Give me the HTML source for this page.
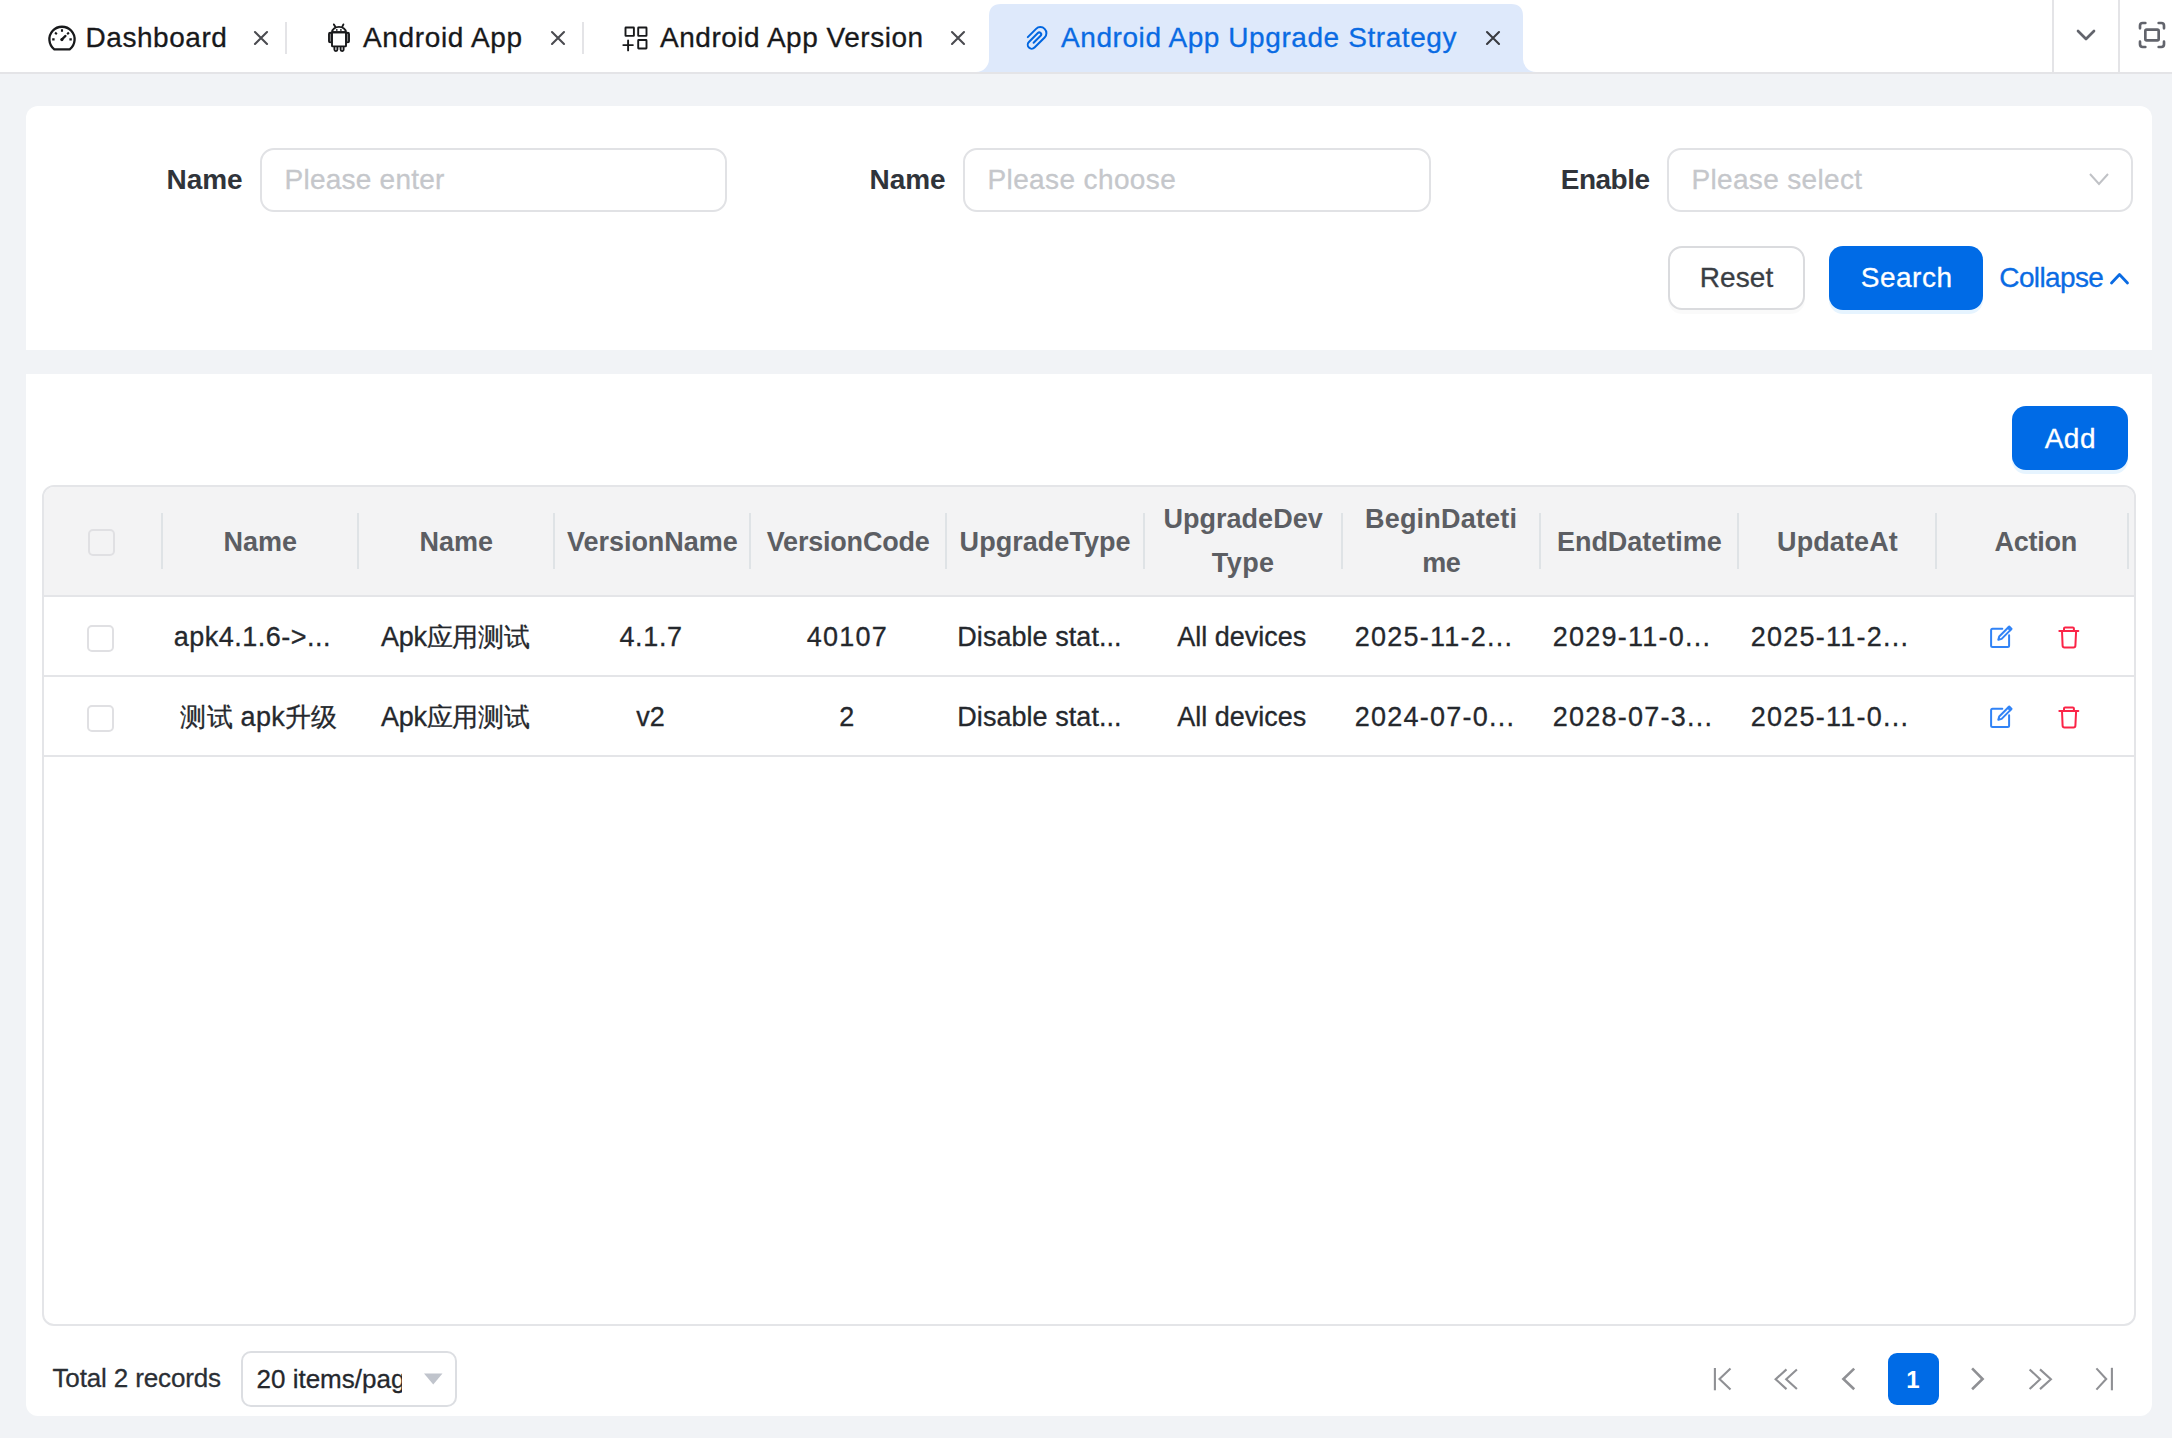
<!DOCTYPE html>
<html><head><meta charset="utf-8"><title>Android App Upgrade Strategy</title>
<style>
html,body{margin:0;padding:0;}
body{width:2172px;height:1438px;position:relative;overflow:hidden;background:#f1f3f6;font-family:"Liberation Sans", sans-serif;}
#tabbar{position:absolute;left:0;top:0;width:2172px;height:72px;background:#fff;border-bottom:2px solid #e4e4e7;}
.t{position:absolute;white-space:nowrap;}
.n{-webkit-text-stroke:0.3px currentColor;}
.box{position:absolute;box-sizing:border-box;border:2px solid #e1e2e5;background:#fff;}
.cb{position:absolute;width:27px;height:27px;box-sizing:border-box;border:2px solid #e0e0e3;border-radius:5px;}
svg{overflow:visible}
</style></head><body>
<div id="tabbar"></div><svg style="position:absolute;left:976px;top:4px" width="560" height="68" viewBox="0 0 560 68">
<path d="M0 68 A13 13 0 0 0 13 55 L13 12 Q13 0 25 0 L535 0 Q547 0 547 12 L547 55 A13 13 0 0 0 560 68 Z" fill="#dee9fb"/>
</svg><div style="position:absolute;left:285px;top:22px;width:2px;height:32px;background:#e4e4e7"></div><div style="position:absolute;left:582px;top:22px;width:2px;height:32px;background:#e4e4e7"></div><div style="position:absolute;left:2052px;top:0;width:2px;height:72px;background:#e4e4e7"></div><div style="position:absolute;left:2118px;top:0;width:2px;height:72px;background:#e4e4e7"></div><div class="t n" style="left:85.60px;top:24.40px;font-size:28px;line-height:28px;color:#18191b;font-weight:normal;letter-spacing:0.54px;">Dashboard</div>
<div class="t n" style="left:363.00px;top:24.40px;font-size:28px;line-height:28px;color:#18191b;font-weight:normal;letter-spacing:0.65px;">Android App</div>
<div class="t n" style="left:660.00px;top:24.40px;font-size:28px;line-height:28px;color:#18191b;font-weight:normal;letter-spacing:0.52px;">Android App Version</div>
<div class="t n" style="left:1061.00px;top:24.40px;font-size:28px;line-height:28px;color:#0a6be3;font-weight:normal;letter-spacing:0.58px;">Android App Upgrade Strategy</div>
<svg style="position:absolute;left:254px;top:31px" width="14" height="14" viewBox="0 0 14 14"><path d="M1 1 L13 13 M13 1 L1 13" stroke="#4a4b50" stroke-width="2.1" stroke-linecap="round"/></svg>
<svg style="position:absolute;left:551px;top:31px" width="14" height="14" viewBox="0 0 14 14"><path d="M1 1 L13 13 M13 1 L1 13" stroke="#4a4b50" stroke-width="2.1" stroke-linecap="round"/></svg>
<svg style="position:absolute;left:951px;top:31px" width="14" height="14" viewBox="0 0 14 14"><path d="M1 1 L13 13 M13 1 L1 13" stroke="#4a4b50" stroke-width="2.1" stroke-linecap="round"/></svg>
<svg style="position:absolute;left:1486px;top:31px" width="14" height="14" viewBox="0 0 14 14"><path d="M1 1 L13 13 M13 1 L1 13" stroke="#393b40" stroke-width="2.1" stroke-linecap="round"/></svg>
<svg style="position:absolute;left:46px;top:23px" width="32" height="30" viewBox="0 0 32 30" fill="none" stroke="#18191b">
<path d="M8.3 26.3 A12.6 12.6 0 1 1 23.7 26.3 Z" stroke-width="2.3" stroke-linejoin="round"/>
<path d="M16 6.2v2.6 M6.2 16.4h2.4 M23.4 16.4h2.4 M9.1 9.5l1.7 1.7 M22.9 9.5l-1.7 1.7" stroke-width="2.1" stroke-linecap="butt"/>
<path d="M15.9 16.4 L19.5 12.9" stroke-width="2.2" stroke-linecap="round"/><circle cx="15.9" cy="16.6" r="1.6" fill="#18191b" stroke="none"/>
</svg><svg style="position:absolute;left:324px;top:22px" width="30" height="32" viewBox="0 0 30 32" fill="none" stroke="#18191b" stroke-width="1.9">
<path d="M9.9 2.4 L11.3 4.8 M19.4 2.4 L18.2 4.8" stroke-linecap="round"/>
<path d="M8 10.2 A7 5.3 0 0 1 22 10.2 Z" stroke-linejoin="round"/>
<rect x="8" y="10.2" width="14" height="14.2" rx="0.6"/>
<rect x="5" y="10.8" width="2.4" height="9.6" rx="1.2"/><rect x="22.6" y="10.8" width="2.4" height="9.6" rx="1.2"/>
<path d="M10.4 24.4 V27.6 A1.5 1.5 0 0 0 13.4 27.6 V24.4 M16.6 24.4 V27.6 A1.5 1.5 0 0 0 19.6 27.6 V24.4"/>
<circle cx="12.8" cy="7.9" r="0.9" fill="#18191b" stroke="none"/><circle cx="16.9" cy="7.9" r="0.9" fill="#18191b" stroke="none"/>
</svg><svg style="position:absolute;left:621px;top:24px" width="30" height="30" viewBox="0 0 30 30" fill="none" stroke="#18191b" stroke-width="1.9">
<rect x="4.5" y="3.5" width="8.4" height="8.4" rx="0.4"/><rect x="17.2" y="3.5" width="8.3" height="8.4" rx="0.4"/><rect x="17.2" y="16" width="8.3" height="8.5" rx="0.4"/>
<path d="M7.1 16.4 V26.4 M2.3 21.1 H11.9" stroke-linecap="round"/>
</svg><svg style="position:absolute;left:1015px;top:16px" width="44" height="44" viewBox="0 0 44 44">
<path d="M12.80 21.14 L21.07 12.87 A6.05 6.05 0 0 1 29.63 21.43 L19.52 31.54 A3.95 3.95 0 0 1 13.93 25.95 L22.84 17.04 A1.95 1.95 0 0 1 25.60 19.80 L18.60 26.80" fill="none" stroke="#0066e0" stroke-width="2" stroke-linecap="round" stroke-linejoin="round"/>
</svg><svg style="position:absolute;left:2070px;top:19px" width="32" height="32" viewBox="0 0 24 24"><path d="m6 9 6 6 6-6" fill="none" stroke="#62646c" stroke-width="2" stroke-linecap="round" stroke-linejoin="round"/></svg><svg style="position:absolute;left:2136px;top:19px" width="32" height="32" viewBox="0 0 24 24" fill="none" stroke="#62646c" stroke-width="2" stroke-linecap="round" stroke-linejoin="round"><path d="M3 7V5a2 2 0 0 1 2-2h2"/><path d="M17 3h2a2 2 0 0 1 2 2v2"/><path d="M21 17v2a2 2 0 0 1-2 2h-2"/><path d="M7 21H5a2 2 0 0 1-2-2v-2"/><rect width="10" height="8" x="7" y="8" rx="1"/></svg><div style="position:absolute;left:26px;top:106px;width:2126px;height:244px;background:#fff;border-radius:12px 12px 0 0"></div><div class="t" style="right:1930.67px;top:166.30px;font-size:28px;line-height:28px;color:#30343a;font-weight:bold;letter-spacing:-0.13px;margin-right:-1px">Name</div>
<div class="t" style="right:1227.67px;top:166.30px;font-size:28px;line-height:28px;color:#30343a;font-weight:bold;letter-spacing:-0.13px;margin-right:-1px">Name</div>
<div class="t" style="right:523.57px;top:166.30px;font-size:28px;line-height:28px;color:#30343a;font-weight:bold;letter-spacing:-0.53px;margin-right:-1px">Enable</div>
<div class="box" style="left:260px;top:148px;width:467px;height:64px;border-radius:14px"></div><div class="t n" style="left:284.50px;top:166.30px;font-size:28px;line-height:28px;color:#c5c7cb;font-weight:normal;letter-spacing:0.24px;">Please enter</div>
<div class="box" style="left:963px;top:148px;width:468px;height:64px;border-radius:14px"></div><div class="t n" style="left:987.50px;top:166.30px;font-size:28px;line-height:28px;color:#c5c7cb;font-weight:normal;letter-spacing:0.38px;">Please choose</div>
<div class="box" style="left:1667px;top:148px;width:466px;height:64px;border-radius:14px"></div><div class="t n" style="left:1691.50px;top:166.30px;font-size:28px;line-height:28px;color:#c5c7cb;font-weight:normal;letter-spacing:0.33px;">Please select</div>
<svg style="position:absolute;left:2087px;top:170px" width="24" height="20" viewBox="0 0 24 20"><path d="M3 4 L12 14 L21 4" fill="none" stroke="#c0c2c6" stroke-width="2"/></svg><div class="box" style="left:1668px;top:246px;width:137px;height:64px;border-radius:14px;border-color:#dadbde;box-shadow:0 4px 0 rgba(0,0,0,0.02)"></div><div class="t n" style="left:1668.07px;width:137px;text-align:center;top:264.30px;font-size:28px;line-height:28px;color:#3a3e44;font-weight:normal;letter-spacing:0.13px;">Reset</div>
<div style="position:absolute;left:1829px;top:246px;width:154px;height:64px;border-radius:14px;background:#006be6;box-shadow:0 4px 0 rgba(5,145,255,0.1)"></div><div class="t n" style="left:1829.67px;width:154px;text-align:center;top:264.30px;font-size:28px;line-height:28px;color:#ffffff;font-weight:normal;letter-spacing:0.53px;">Search</div>
<div class="t n" style="left:1999.30px;top:264.30px;font-size:28px;line-height:28px;color:#0a6be3;font-weight:normal;letter-spacing:-0.63px;">Collapse</div>
<svg style="position:absolute;left:2107px;top:268px" width="26" height="20" viewBox="0 0 26 20"><path d="M4.5 15 L12.5 6.5 L20.5 15" fill="none" stroke="#0a6be3" stroke-width="2.8" stroke-linecap="round" stroke-linejoin="round"/></svg><div style="position:absolute;left:26px;top:374px;width:2126px;height:1042px;background:#fff;border-radius:0 0 12px 12px"></div><div style="position:absolute;left:2012px;top:406px;width:116px;height:64px;border-radius:14px;background:#006be6;box-shadow:0 4px 0 rgba(5,145,255,0.1)"></div><div class="t n" style="left:2012.37px;width:116px;text-align:center;top:424.90px;font-size:28px;line-height:28px;color:#ffffff;font-weight:normal;letter-spacing:0.53px;">Add</div>
<div style="position:absolute;left:42px;top:485px;width:2094px;height:841px;box-sizing:border-box;border:2px solid #e4e5e8;border-radius:12px;overflow:hidden"><div style="position:absolute;left:0;top:0;right:0;height:108px;background:#f3f3f4;border-bottom:2px solid #e4e5e8"></div><div style="position:absolute;left:0;top:188px;right:0;height:2px;background:#e4e5e8"></div><div style="position:absolute;left:0;top:268px;right:0;height:2px;background:#e4e5e8"></div></div><div style="position:absolute;left:161px;top:513px;width:2px;height:56px;background:#dfe3e6"></div><div style="position:absolute;left:357px;top:513px;width:2px;height:56px;background:#dfe3e6"></div><div style="position:absolute;left:553px;top:513px;width:2px;height:56px;background:#dfe3e6"></div><div style="position:absolute;left:749px;top:513px;width:2px;height:56px;background:#dfe3e6"></div><div style="position:absolute;left:945px;top:513px;width:2px;height:56px;background:#dfe3e6"></div><div style="position:absolute;left:1143px;top:513px;width:2px;height:56px;background:#dfe3e6"></div><div style="position:absolute;left:1341px;top:513px;width:2px;height:56px;background:#dfe3e6"></div><div style="position:absolute;left:1539px;top:513px;width:2px;height:56px;background:#dfe3e6"></div><div style="position:absolute;left:1737px;top:513px;width:2px;height:56px;background:#dfe3e6"></div><div style="position:absolute;left:1935px;top:513px;width:2px;height:56px;background:#dfe3e6"></div><div style="position:absolute;left:2127px;top:513px;width:2px;height:56px;background:#dfe3e6"></div><div class="cb" style="left:88px;top:529px"></div><div class="cb" style="left:87px;top:625px;background:#fff"></div><div class="cb" style="left:87px;top:705px;background:#fff"></div><div class="t" style="left:162.30px;width:196px;text-align:center;top:528.54px;font-size:27px;line-height:27px;color:#5c5e63;font-weight:bold;letter-spacing:-0.01px;">Name</div>
<div class="t" style="left:358.30px;width:196px;text-align:center;top:528.54px;font-size:27px;line-height:27px;color:#5c5e63;font-weight:bold;letter-spacing:-0.01px;">Name</div>
<div class="t" style="left:554.38px;width:196px;text-align:center;top:528.54px;font-size:27px;line-height:27px;color:#5c5e63;font-weight:bold;letter-spacing:-0.04px;">VersionName</div>
<div class="t" style="left:750.19px;width:196px;text-align:center;top:528.54px;font-size:27px;line-height:27px;color:#5c5e63;font-weight:bold;letter-spacing:-0.21px;">VersionCode</div>
<div class="t" style="left:947.12px;width:196px;text-align:center;top:528.54px;font-size:27px;line-height:27px;color:#5c5e63;font-weight:bold;letter-spacing:0.04px;">UpgradeType</div>
<div class="t" style="left:1541.39px;width:196px;text-align:center;top:528.54px;font-size:27px;line-height:27px;color:#5c5e63;font-weight:bold;letter-spacing:-0.01px;">EndDatetime</div>
<div class="t" style="left:1739.45px;width:196px;text-align:center;top:528.54px;font-size:27px;line-height:27px;color:#5c5e63;font-weight:bold;letter-spacing:0.1px;">UpdateAt</div>
<div class="t" style="left:1937.79px;width:196px;text-align:center;top:528.54px;font-size:27px;line-height:27px;color:#5c5e63;font-weight:bold;letter-spacing:-0.22px;">Action</div>
<div class="t" style="left:1145.12px;width:196px;text-align:center;top:506.24px;font-size:27px;line-height:27px;color:#5c5e63;font-weight:bold;letter-spacing:0.04px;">UpgradeDev</div>
<div class="t" style="left:1145.21px;width:196px;text-align:center;top:550.44px;font-size:27px;line-height:27px;color:#5c5e63;font-weight:bold;letter-spacing:0.43px;">Type</div>
<div class="t" style="left:1343.10px;width:196px;text-align:center;top:506.24px;font-size:27px;line-height:27px;color:#5c5e63;font-weight:bold;letter-spacing:0.2px;">BeginDateti</div>
<div class="t" style="left:1343.35px;width:196px;text-align:center;top:550.44px;font-size:27px;line-height:27px;color:#5c5e63;font-weight:bold;letter-spacing:-0.31px;">me</div>
<div class="t n" style="left:173.80px;top:623.84px;font-size:27px;line-height:27px;color:#25282d;font-weight:normal;letter-spacing:0.49px;">apk4.1.6-&gt;...</div>
<div class="t n" style="left:357.25px;width:196px;text-align:center;top:623.84px;font-size:27px;line-height:27px;color:#25282d;font-weight:normal;letter-spacing:-0.3px;">Apk<span style="font-size:25.5px">应</span><span style="font-size:25.5px">用</span><span style="font-size:25.5px">测</span><span style="font-size:25.5px">试</span></div>
<div class="t n" style="left:553.12px;width:196px;text-align:center;top:623.84px;font-size:27px;line-height:27px;color:#25282d;font-weight:normal;letter-spacing:0.64px;">4.1.7</div>
<div class="t n" style="left:749.43px;width:196px;text-align:center;top:623.84px;font-size:27px;line-height:27px;color:#25282d;font-weight:normal;letter-spacing:1.26px;">40107</div>
<div class="t n" style="left:957.30px;top:623.84px;font-size:27px;line-height:27px;color:#25282d;font-weight:normal;letter-spacing:0.05px;">Disable stat...</div>
<div class="t n" style="left:1143.79px;width:196px;text-align:center;top:623.84px;font-size:27px;line-height:27px;color:#25282d;font-weight:normal;letter-spacing:-0.02px;">All devices</div>
<div class="t n" style="left:1354.70px;top:623.84px;font-size:27px;line-height:27px;color:#25282d;font-weight:normal;letter-spacing:1.24px;">2025-11-2...</div>
<div class="t n" style="left:1552.80px;top:623.84px;font-size:27px;line-height:27px;color:#25282d;font-weight:normal;letter-spacing:1.24px;">2029-11-0...</div>
<div class="t n" style="left:1750.80px;top:623.84px;font-size:27px;line-height:27px;color:#25282d;font-weight:normal;letter-spacing:1.24px;">2025-11-2...</div>
<svg style="position:absolute;left:1988px;top:624px" width="26" height="26" viewBox="0 0 26 26" fill="none" stroke="#3183f6" stroke-width="2" stroke-linejoin="round" stroke-linecap="round">
<path d="M14.3 4.7 H4.6 Q3.1 4.7 3.1 6.2 V21.4 Q3.1 22.9 4.6 22.9 H19.6 Q21.1 22.9 21.1 21.4 V11.2"/>
<path d="M10.3 15.8 L11.22 12.48 L21.2 2.5 L23.6 4.9 L13.62 14.88 Z"/><path d="M19.93 3.77 L22.33 6.17"/></svg><svg style="position:absolute;left:2056px;top:625px" width="26" height="26" viewBox="0 0 26 26" fill="none" stroke="#fb2447" stroke-width="2" stroke-linejoin="round" stroke-linecap="round">
<path d="M3.3 6 H22.3"/><path d="M8 6 V3.6 Q8 2.5 9.1 2.5 H16.8 Q17.9 2.5 17.9 3.6 V6"/><path d="M6 6 L6.6 20.6 Q6.7 22.4 8.5 22.4 H17.5 Q19.3 22.4 19.4 20.6 L20.1 6"/></svg><div class="t n" style="left:160.95px;width:196px;text-align:center;top:703.84px;font-size:27px;line-height:27px;color:#25282d;font-weight:normal;letter-spacing:0.3px;"><span style="font-size:25.5px">测</span><span style="font-size:25.5px">试</span> apk<span style="font-size:25.5px">升</span><span style="font-size:25.5px">级</span></div>
<div class="t n" style="left:357.25px;width:196px;text-align:center;top:703.84px;font-size:27px;line-height:27px;color:#25282d;font-weight:normal;letter-spacing:-0.3px;">Apk<span style="font-size:25.5px">应</span><span style="font-size:25.5px">用</span><span style="font-size:25.5px">测</span><span style="font-size:25.5px">试</span></div>
<div class="t n" style="left:552.50px;width:196px;text-align:center;top:703.84px;font-size:27px;line-height:27px;color:#25282d;font-weight:normal;">v2</div>
<div class="t n" style="left:748.80px;width:196px;text-align:center;top:703.84px;font-size:27px;line-height:27px;color:#25282d;font-weight:normal;">2</div>
<div class="t n" style="left:957.30px;top:703.84px;font-size:27px;line-height:27px;color:#25282d;font-weight:normal;letter-spacing:0.05px;">Disable stat...</div>
<div class="t n" style="left:1143.79px;width:196px;text-align:center;top:703.84px;font-size:27px;line-height:27px;color:#25282d;font-weight:normal;letter-spacing:-0.02px;">All devices</div>
<div class="t n" style="left:1354.70px;top:703.84px;font-size:27px;line-height:27px;color:#25282d;font-weight:normal;letter-spacing:1.24px;">2024-07-0...</div>
<div class="t n" style="left:1552.80px;top:703.84px;font-size:27px;line-height:27px;color:#25282d;font-weight:normal;letter-spacing:1.24px;">2028-07-3...</div>
<div class="t n" style="left:1750.80px;top:703.84px;font-size:27px;line-height:27px;color:#25282d;font-weight:normal;letter-spacing:1.24px;">2025-11-0...</div>
<svg style="position:absolute;left:1988px;top:704px" width="26" height="26" viewBox="0 0 26 26" fill="none" stroke="#3183f6" stroke-width="2" stroke-linejoin="round" stroke-linecap="round">
<path d="M14.3 4.7 H4.6 Q3.1 4.7 3.1 6.2 V21.4 Q3.1 22.9 4.6 22.9 H19.6 Q21.1 22.9 21.1 21.4 V11.2"/>
<path d="M10.3 15.8 L11.22 12.48 L21.2 2.5 L23.6 4.9 L13.62 14.88 Z"/><path d="M19.93 3.77 L22.33 6.17"/></svg><svg style="position:absolute;left:2056px;top:705px" width="26" height="26" viewBox="0 0 26 26" fill="none" stroke="#fb2447" stroke-width="2" stroke-linejoin="round" stroke-linecap="round">
<path d="M3.3 6 H22.3"/><path d="M8 6 V3.6 Q8 2.5 9.1 2.5 H16.8 Q17.9 2.5 17.9 3.6 V6"/><path d="M6 6 L6.6 20.6 Q6.7 22.4 8.5 22.4 H17.5 Q19.3 22.4 19.4 20.6 L20.1 6"/></svg><div class="t n" style="left:52.50px;top:1364.69px;font-size:26px;line-height:26px;color:#2b2f35;font-weight:normal;letter-spacing:-0.14px;">Total 2 records</div>
<div class="box" style="left:241px;top:1351px;width:216px;height:56px;border-radius:10px;border-color:#dcdee2"></div><div style="position:absolute;left:256px;top:1353px;width:146px;height:52px;overflow:hidden"><div class="t n" style="left:0.50px;top:12.99px;font-size:26px;line-height:26px;color:#25282d;font-weight:normal;">20 items/page</div>
</div><svg style="position:absolute;left:424px;top:1373px" width="19" height="12" viewBox="0 0 19 12"><path d="M0 0.5 H18.5 L9.25 11.5 Z" fill="#c0c4cc"/></svg><div style="position:absolute;left:1888px;top:1353px;width:51px;height:52px;border-radius:9px;background:#006be6"></div><div class="t" style="left:1887.50px;width:51px;text-align:center;top:1367.68px;font-size:24px;line-height:24px;color:#ffffff;font-weight:bold;">1</div>
<svg style="position:absolute;left:1700px;top:1350px" width="430" height="60" viewBox="1700 1350 430 60"><path d="M1714.9 1368 V1390.3" fill="none" stroke="#8f9094" stroke-width="2.1" stroke-linejoin="miter" stroke-linecap="butt"/><path d="M1730.5 1368.6 L1719.5 1379.1 L1730.5 1389.6" fill="none" stroke="#8f9094" stroke-width="2.1" stroke-linejoin="miter" stroke-linecap="butt"/><path d="M1786.5 1369.4 L1775.6 1379.2 L1786.5 1389.1 M1796.9 1369.4 L1786.2 1379.2 L1796.9 1389.1" fill="none" stroke="#8f9094" stroke-width="2.1" stroke-linejoin="miter" stroke-linecap="butt"/><path d="M1854.2 1368.6 L1843.4 1379 L1854.2 1389.3" fill="none" stroke="#8f9094" stroke-width="2.6" stroke-linejoin="miter" stroke-linecap="butt"/><path d="M1972.1 1368.4 L1982.6 1379 L1972.1 1389.3" fill="none" stroke="#8f9094" stroke-width="2.6" stroke-linejoin="miter" stroke-linecap="butt"/><path d="M2029.6 1369.4 L2040.1 1379.2 L2029.6 1389.1 M2040 1369.4 L2050.9 1379.2 L2040 1389.1" fill="none" stroke="#8f9094" stroke-width="2.1" stroke-linejoin="miter" stroke-linecap="butt"/><path d="M2096.4 1368.4 L2106.2 1379 L2096.4 1389.6" fill="none" stroke="#8f9094" stroke-width="2.1" stroke-linejoin="miter" stroke-linecap="butt"/><path d="M2111.9 1367.8 V1390.3" fill="none" stroke="#8f9094" stroke-width="2.1" stroke-linejoin="miter" stroke-linecap="butt"/></svg>
</body></html>
